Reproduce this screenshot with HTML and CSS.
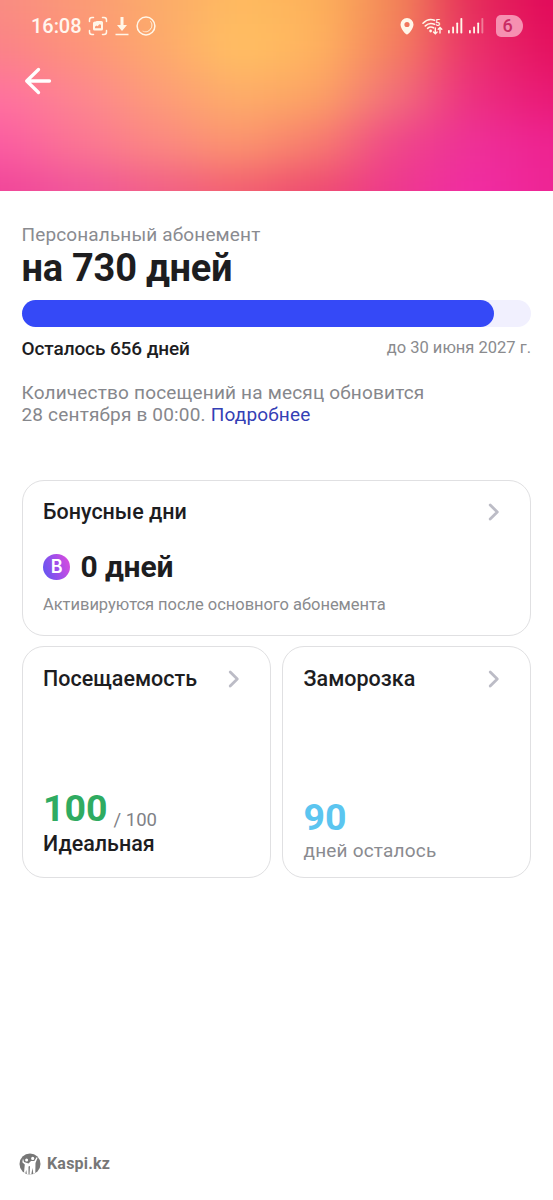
FILE: index.html
```html
<!DOCTYPE html>
<html lang="ru">
<head>
<meta charset="utf-8">
<title>Персональный абонемент</title>
<link rel="stylesheet" href="styles.css">
</head>
<body>
<div class="screen">
  <header class="hero">
    <svg class="mesh" width="553" height="191" viewBox="0 0 553 191" aria-hidden="true">
      <defs><filter id="soft" filterUnits="userSpaceOnUse" x="-150" y="-120" width="853" height="431" color-interpolation-filters="sRGB"><feGaussianBlur stdDeviation="30 19"/></filter></defs>
      <g id="mesh" filter="url(#soft)"></g>
    </svg>
    <div class="status">
      <span class="clock">16:08</span>
      <svg class="ic-shot" width="20" height="20" viewBox="0 0 20 20" fill="none" stroke="currentColor" stroke-width="1.500" stroke-linecap="round"><path d="M1.500 5.500V4Q1.500 1.500 4 1.500H5.500M14.500 1.500H16Q18.500 1.500 18.500 4V5.500M18.500 14.500V16Q18.500 18.500 16 18.500H14.500M5.500 18.500H4Q1.500 18.500 1.500 16V14.500"/><path fill="currentColor" stroke="none" fill-rule="evenodd" d="M7 5.500H8L8.600 5H13.500Q15 5 15 6.500V13Q15 14.500 13.500 14.500H6.500Q5 14.500 5 13V7Q5 5.500 7 5.500ZM7 12.300H13V8.800L11.500 8.200L9.500 10.200L8.300 9.500L7 10.800Z"/></svg>
      <svg class="ic-down" width="14" height="19" viewBox="0 0 14 19"><path fill="currentColor" d="M5.500 0H8.500V8H12L7 14L2 8H5.500ZM.5 16.700H13.500V18.300H.5Z"/></svg>
      <svg class="ic-ring" width="20" height="20" viewBox="0 0 20 20" fill="none" stroke="currentColor" stroke-width="1.500"><circle cx="10" cy="10" r="8.900"/><path d="M14.200 5A6.400 6.400 0 0 1 6.500 15Q9.500 16.800 13 14.300Q17.500 10.500 14.200 5Z" fill="currentColor" stroke="none"/><path d="M14.200 5A6.400 6.400 0 0 1 6.500 15" stroke-width=".6"/></svg>
      <span class="grow"></span>
      <svg class="ic-pin" width="14" height="17" viewBox="0 0 14 17"><path fill="currentColor" fill-rule="evenodd" d="M7 0A6.500 6.500 0 0 1 13.500 6.500C13.500 10.500 8.500 16.500 7 16.500S.5 10.500.5 6.500A6.500 6.500 0 0 1 7 0ZM7 3.900A2.600 2.600 0 1 0 7 9.100A2.600 2.600 0 1 0 7 3.900Z"/></svg>
      <svg class="ic-wifi" width="21" height="17" viewBox="0 0 21 17" fill="none" stroke="currentColor" stroke-width="1.600" stroke-linecap="round"><path d="M1 5.200Q6.500-.3 12.500 2.300M3.300 7.900Q7.500 4 12.500 6.300M5.600 10.300Q8.500 8 11.500 9.800"/><circle cx="8.600" cy="13" r="1.400" fill="currentColor" stroke="none"/><path stroke-width="1.400" d="M13.300 10V15.500M11.500 13.900L13.300 15.700L15.100 13.900M18 15V9.500M16.200 11.300L18 9.500L19.800 11.300"/><text x="13.600" y="7.800" class="wifi-num">5</text></svg>
      <svg class="ic-sig" width="15" height="16" viewBox="0 0 15 16" fill="currentColor"><rect x="0" y="12" width="1.800" height="3.500" rx=".8"/><rect x="4.200" y="8.500" width="1.800" height="7" rx=".8"/><rect x="8.300" y="4.500" width="1.800" height="11" rx=".8"/><rect x="12.400" y="0" width="1.900" height="15.500" rx=".8"/></svg>
      <svg class="ic-sig2" width="15" height="16" viewBox="0 0 15 16" fill="currentColor"><rect x="0" y="12" width="1.800" height="3.500" rx=".8"/><rect x="4.200" y="8.500" width="1.800" height="7" rx=".8"/><rect x="8.300" y="4.500" width="1.800" height="11" rx=".8"/><rect x="12.400" y="0" width="1.900" height="15.500" rx=".8" opacity=".4"/></svg>
      <span class="battery">6</span>
    </div>
    <svg class="back" width="28" height="28" viewBox="0 0 28 28" fill="none" stroke="#fff" stroke-width="3.300" stroke-linecap="round" stroke-linejoin="round"><path d="M14.500 2.500L2.700 14L14.500 25.500M3 14H25.500"/></svg>
  </header>

  <main class="content">
    <section class="plan">
      <p class="label">Персональный абонемент</p>
      <h1 class="title">на 730 дней</h1>
      <div class="track"><div class="fill"></div></div>
      <div class="row">
        <span class="left">Осталось 656 дней</span>
        <span class="until">до 30 июня 2027 г.</span>
      </div>
      <p class="note">Количество посещений на месяц обновится<br>28 сентября в 00:00. <a class="more">Подробнее</a></p>
    </section>

    <section class="card bonus">
      <div class="head"><h2>Бонусные дни</h2><svg class="chev" width="12" height="18" viewBox="0 0 12 18"><path d="M2.200 2L9.300 9L2.200 16"/></svg></div>
      <div class="bonus-value"><span class="coin">B</span><span>0 дней</span></div>
      <p class="hint">Активируются после основного абонемента</p>
    </section>

    <div class="pair">
      <section class="card tile">
        <div class="head"><h2>Посещаемость</h2><svg class="chev" width="12" height="18" viewBox="0 0 12 18"><path d="M2.200 2L9.300 9L2.200 16"/></svg></div>
        <div class="score"><b class="green">100</b><span class="of">/ 100</span></div>
        <p class="ideal">Идеальная</p>
      </section>
      <section class="card tile">
        <div class="head"><h2>Заморозка</h2><svg class="chev" width="12" height="18" viewBox="0 0 12 18"><path d="M2.200 2L9.300 9L2.200 16"/></svg></div>
        <b class="cyan">90</b>
        <p class="remain">дней осталось</p>
      </section>
    </div>
  </main>

  <footer class="brand">
    <svg width="22" height="22" viewBox="0 0 22 22"><circle cx="11" cy="11" r="10.500" fill="#777"/><path fill="#fff" d="M7.600 5.600A1.500 1.500 0 1 1 7.600 8.600A1.500 1.500 0 1 1 7.600 5.600ZM13.700 3.800A1.600 1.600 0 1 1 13.700 7A1.600 1.600 0 1 1 13.700 3.800ZM4 5.500L5 9L9.500 10.500L12 8H15.300L17.600 4.200L18.600 4.800L16.500 10L16.300 20L14.300 21L13.500 15L12.300 21.500H10.500L11 13L9.500 13.500V21.300L7.800 21L7.300 17L6.300 20.300L5 19.500L5.800 11.500L3.300 9.200Z"/></svg>
    <span>Kaspi.kz</span>
  </footer>
</div>
<script src="mesh.js"></script>
</body>
</html>
```
FILE: styles.css
```css
* { box-sizing: border-box; }
body { margin: 0; background: #fff; font-family: Roboto, "Noto Sans", sans-serif; color: #1d1d1f; }
h1, h2, p { margin: 0; }
.screen { width: 553px; height: 1200px; display: flex; flex-direction: column; overflow: hidden; }

.hero { position: relative; isolation: isolate; height: 191px; flex: none; overflow: hidden; background: #f4706f; }
.mesh { position: absolute; inset: 0; z-index: -1; }

.status { display: flex; align-items: center; height: 52px; padding: 0 30px 0 31px; color: #fff6e8; }
.status svg { flex: none; }
.clock { font: 500 20px/24px Roboto, sans-serif; color: #fff6ee; letter-spacing: -.05px; }
.ic-shot { margin-left: 6px; }
.ic-down { margin-left: 7px; }
.ic-ring { margin-left: 7px; }
.grow { flex: 1; }
.ic-wifi { margin-left: 8px; }
.wifi-num { font: 700 8.500px Roboto, sans-serif; fill: currentColor; stroke: none; }
.ic-sig { margin-left: 5px; }
.ic-sig2 { margin-left: 6px; }
.battery { margin-left: 12px; width: 27px; height: 22px; border-radius: 5px 11px 11px 5px; background: #f690b1; color: #c92c64; font: 500 18px/22px Roboto, sans-serif; text-align: center; padding-right: 4px; }
.back { display: block; margin: 15px 0 0 24px; }

.content { padding: 33px 22px 0 21.500px; }
.label { font-size: 19px; line-height: 22px; color: #8a8b90; letter-spacing: .13px; }
.title { font-size: 38px; line-height: 44px; font-weight: 700; letter-spacing: -.25px; }
.track { margin-top: 10px; height: 27px; border-radius: 14px; background: #f1f0fe; }
.fill { width: 472px; height: 27px; border-radius: 14px; background: #3549f7; }
.row { display: flex; justify-content: space-between; margin-top: 10px; line-height: 24px; }
.left { font-size: 19px; font-weight: 500; letter-spacing: -.1px; }
.until { font-size: 16.500px; line-height: 21px; color: #8a8b8e; }
.note { margin-top: 21px; font-size: 19px; line-height: 22px; color: #86878c; letter-spacing: .18px; }
.more { color: #3440b5; }

.card { border: 1px solid #e0e0e2; border-radius: 22px; padding: 20px 30px 0 20.500px; }
.bonus { margin-top: 54px; height: 156px; padding-top: 19px; }
.head { display: flex; align-items: center; justify-content: space-between; height: 24px; }
.head h2 { font-size: 21.500px; line-height: 24px; font-weight: 500; }
.chev { fill: none; stroke: #bcbcc6; stroke-width: 2.800; stroke-linecap: round; stroke-linejoin: round; }
.bonus-value { display: flex; align-items: center; gap: 11px; margin-top: 24px; height: 37px; font-size: 30px; line-height: 36px; font-weight: 700; letter-spacing: -.1px; }
.coin { width: 26.500px; height: 26px; border-radius: 50%; background: linear-gradient(70deg, #5b57f2, #a44ee9 55%, #e34bdb); color: #fff; font: 600 18px/26px Inter, sans-serif; text-align: center; padding-left: 1px; }
.hint { margin-top: 10px; font-size: 16.500px; line-height: 20px; color: #8a8b8e; letter-spacing: -.04px; }
.pair { display: grid; grid-template-columns: 249.500px 249px; gap: 11px; margin-top: 10px; }
.tile { height: 232px; }
.score { display: flex; align-items: flex-end; gap: 6px; margin-top: 95px; height: 45px; }
.green { font-size: 37.500px; line-height: 44px; color: #2fab61; padding-bottom: 1px; }
.of { font-size: 18.500px; line-height: 22px; color: #808186; }
.ideal { font-size: 21.500px; line-height: 24px; font-weight: 500; margin-top: 1px; }
.cyan { display: block; margin-top: 104px; font-size: 37.500px; line-height: 44px; color: #5bc5f0; }
.remain { margin-top: 1px; font-size: 19px; line-height: 22px; color: #8a8b90; letter-spacing: .2px; }
.brand { display: flex; align-items: center; gap: 6px; margin-top: auto; padding: 0 0 25px 19px; font: 700 16px/22px Roboto, sans-serif; color: #777; letter-spacing: .2px; }
```
FILE: mesh.js
```javascript
// Colour grid of the hero background; the SVG filter blends the cells together.
const rows = [
  "f98c82 fb9a76 fbab6a ffba60 fdb25a f38858 e42a5a e2085a",
  "fb8288 fd9379 fda96c ffc062 ffb45f f4805f ea306a e4105f",
  "ff719f fd8690 fd9c78 fdae68 fca463 f2707a ec2e80 e91874",
  "fb5ca2 fb7594 fb8882 fb956e f77d6e ef4689 ee3098 ee2290",
  "f04499 f0559a f15e88 f25e70 ee4a70 ee388e f02ca4 ee2494"
];
const stepX = 79, stepY = 48, pad = 150;
const mesh = document.getElementById("mesh");
rows.forEach((line, r) => {
  const cells = line.split(" ");
  cells.forEach((hex, c) => {
    const x0 = c === 0 ? -pad : (c - 0.5) * stepX;
    const x1 = c === cells.length - 1 ? 553 + pad : (c + 0.5) * stepX;
    const y0 = r === 0 ? -pad : (r - 0.5) * stepY;
    const y1 = r === rows.length - 1 ? 191 + pad : (r + 0.5) * stepY;
    const cell = document.createElementNS("http://www.w3.org/2000/svg", "rect");
    cell.setAttribute("x", x0);
    cell.setAttribute("y", y0);
    cell.setAttribute("width", x1 - x0 + 0.5);
    cell.setAttribute("height", y1 - y0 + 0.5);
    cell.setAttribute("fill", "#" + hex);
    mesh.appendChild(cell);
  });
});
```
